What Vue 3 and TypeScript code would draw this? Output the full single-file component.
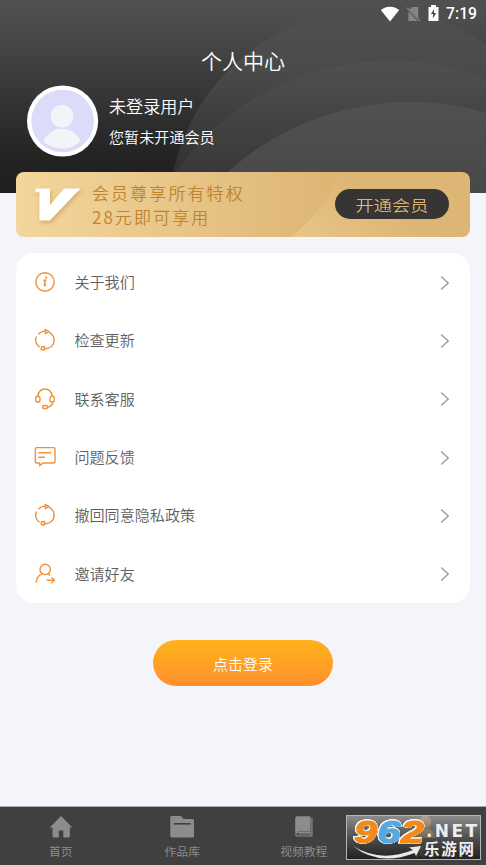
<script setup lang="ts">
type IconName = 'info' | 'refresh' | 'service' | 'message' | 'invite'

interface MenuItem {
  label: string
  icon: IconName
}

const menu: MenuItem[] = [
  { label: '关于我们', icon: 'info' },
  { label: '检查更新', icon: 'refresh' },
  { label: '联系客服', icon: 'service' },
  { label: '问题反馈', icon: 'message' },
  { label: '撤回同意隐私政策', icon: 'refresh' },
  { label: '邀请好友', icon: 'invite' },
]
</script>

<template>
  <div class="page">
    <header class="header">
      <svg class="rings" width="486" height="193" viewBox="0 0 486 193">
        <defs>
          <linearGradient id="ringA" gradientUnits="userSpaceOnUse" x1="0" y1="20" x2="0" y2="193">
            <stop offset="0" stop-color="#4f4f4f" />
            <stop offset=".3" stop-color="#4a4a4a" />
            <stop offset="1" stop-color="#2b2b2b" />
          </linearGradient>
          <linearGradient id="ringB" gradientUnits="userSpaceOnUse" x1="0" y1="61" x2="0" y2="193">
            <stop offset="0" stop-color="#505050" />
            <stop offset="1" stop-color="#343434" />
          </linearGradient>
          <linearGradient id="ringC" gradientUnits="userSpaceOnUse" x1="0" y1="102" x2="0" y2="193">
            <stop offset="0" stop-color="#515151" />
            <stop offset="1" stop-color="#484848" />
          </linearGradient>
        </defs>
        <circle cx="373" cy="214" r="204" fill="url(#ringA)" />
        <circle cx="390" cy="324" r="263" fill="url(#ringB)" />
        <circle cx="410" cy="374" r="272" fill="url(#ringC)" />
      </svg>
      <div class="status">
        <svg class="wifi" width="20" height="16" viewBox="0 0 20 16">
          <path d="M.8 4.1C6-.4 14-.4 19.2 4.1L10 15.4z" fill="#fff" />
        </svg>
        <svg class="sim" width="15" height="16" viewBox="0 0 15 16">
          <path d="M6 1h6.2v11.7L3.5 3.5zM2.4 5.2l9.2 9.8H2.4z" fill="#858585" />
          <path d="M1 1.7l13 13.4" stroke="#858585" stroke-width="1.3" />
        </svg>
        <svg class="battery" width="11" height="16" viewBox="0 0 11 16">
          <path d="M3 0h5v2h2.5v14H.5V2H3z" fill="#fff" />
          <path d="M6.2 4L2.9 9h2.2L4.7 13.5 8.2 8H6z" fill="#494949" />
        </svg>
        <span class="time">7:19</span>
      </div>
      <h1 class="title">个人中心</h1>
      <div class="profile">
        <svg class="avatar" width="72" height="72" viewBox="0 0 72 72">
          <circle cx="35.6" cy="36" r="35.6" fill="#fff" />
          <circle cx="35.6" cy="36" r="31.3" fill="#dbdcf9" />
          <circle cx="35" cy="31.3" r="11.3" fill="#f2f4f8" />
          <path d="M16.4 56C23.6 39.5 46.1 39.5 53.6 56C44.6 66 25.6 66 16.4 56z" fill="#f2f4f8" />
        </svg>
        <div class="user">
          <div class="name">未登录用户</div>
          <div class="state">您暂未开通会员</div>
        </div>
      </div>
    </header>

    <section class="vip">
      <svg class="vip-bg" width="454" height="65" viewBox="0 0 454 65">
        <defs>
          <linearGradient id="goldA" x1="0" y1="0" x2="1" y2="0">
            <stop offset="0" stop-color="#f3d69d" />
            <stop offset="1" stop-color="#ddb472" />
          </linearGradient>
          <linearGradient id="goldB" x1="0" y1="1" x2="1" y2=".5">
            <stop offset="0" stop-color="#e9c788" />
            <stop offset=".65" stop-color="#ddb574" />
          </linearGradient>
        </defs>
        <rect width="330" height="65" fill="url(#goldA)" />
        <path d="M324 0Q309 40 274 65H454V0z" fill="url(#goldB)" />
      </svg>
      <svg class="vee" width="48" height="38" viewBox="0 0 48 38">
        <path d="M1.5 2.5H16V19L30 2.5H46.5L16 34.5H5.4V6.2H1.5z" fill="#fff" />
      </svg>
      <div class="vip-text">
        <div>会员尊享所有特权</div>
        <div>28元即可享用</div>
      </div>
      <button class="vip-btn"><span>开通会员</span></button>
    </section>

    <main class="card">
      <div v-for="item in menu" :key="item.label" class="row">
        <svg class="icon" width="24" height="24" viewBox="0 0 24 24">
          <template v-if="item.icon === 'info'">
            <circle cx="12" cy="12" r="9.2" />
            <path d="M10.4 10.7l2.2-.6-1.3 5q0 1 1.8-.2" stroke-width="1.6" />
            <circle class="solid" cx="13.3" cy="7.7" r="1.1" />
          </template>
          <template v-else-if="item.icon === 'refresh'">
            <path d="M3.4 8.6C1.8 12.8 3.2 16.6 6.6 19.2M5.2 6.4C7 4.3 9 3.2 12 3.1M15.8 4.2c6.3 3 7 10.6 2.2 14.6-2 1.5-4.3 2.1-6.3 1.9" />
            <path d="M12.2 1.3l3.6 2-3.4 2.3zM11.7 18.4l-3.2.6-.3 2.3 2.9 1z" />
          </template>
          <template v-else-if="item.icon === 'service'">
            <path d="M4.6 9.1C6.4-.4 17.6-.4 19.4 9.1M19.9 15.5c-.7 2.6-2.3 4.2-5.4 4.7" />
            <rect x="2.7" y="9.2" width="4.3" height="5.8" rx="2.1" />
            <rect x="17" y="9.2" width="4.3" height="5.8" rx="2.1" />
            <rect x="9.6" y="18.5" width="5" height="3" rx="1.5" />
          </template>
          <template v-else-if="item.icon === 'message'">
            <path d="M3.4 2.6H20.6Q22 2.6 22 4V16.8Q22 18 20.7 18H9.7L6.7 20.8V18H3.6Q2.4 18 2.4 16.8V4Q2.4 2.6 3.4 2.6zM5.5 7.7H18M5.5 12.3H12" />
          </template>
          <template v-else>
            <circle cx="12.2" cy="7.4" r="5.2" />
            <path d="M3.2 20.8c.3-4.8 2.4-7.6 5.8-9M15.2 12.1l2.1 1.3M13.6 18.2h8M18.4 15.2l3.1 3-3.1 3" />
          </template>
        </svg>
        <span class="label">{{ item.label }}</span>
        <svg class="chev" width="10" height="16" viewBox="0 0 10 16">
          <path d="M1.2 1.6L8.2 8l-7 6.5" />
        </svg>
      </div>
    </main>

    <button class="login"><span>点击登录</span></button>

    <nav class="tabs">
      <div class="tab">
        <svg width="24" height="24" viewBox="0 0 24 24">
          <path d="M12 1L23.3 12.4H20.8V21Q20.8 22.6 19.2 22.6H14.3V15.5H9.8V22.6H5Q3.5 22.6 3.5 21V12.4H.8z" fill="#8c8c8c" />
        </svg>
        <span>首页</span>
      </div>
      <div class="tab">
        <svg width="24" height="24" viewBox="0 0 24 24">
          <path d="M1.6 1H11l2.4 3H22.4Q24 4 24 5.5V21Q24 22.6 22.4 22.6H1.8Q.3 22.6.3 21V2.2Q.3 1 1.6 1z" fill="#8c8c8c" />
          <path d="M3.7 8.8H20.8" stroke="#404040" stroke-width="1.6" />
        </svg>
        <span>作品库</span>
      </div>
      <div class="tab">
        <svg width="24" height="24" viewBox="0 0 24 24">
          <path d="M5.4 1.2H17.2Q18.6 1.2 18.6 2.6V16.5H6.2Q4.4 16.5 3.2 18V3.4Q3.2 1.2 5.4 1.2z" fill="#8c8c8c" />
          <path d="M19.9 3V21H5.9Q3.8 21 3.8 19.2T5.9 17.3H18.2V19H6.4" fill="none" stroke="#8c8c8c" stroke-width="1.2" />
        </svg>
        <span>视频教程</span>
      </div>
      <div class="tab active">
        <svg width="24" height="24" viewBox="0 0 24 24">
          <circle cx="12" cy="7" r="6.2" fill="#e29a3f" />
          <path d="M1.5 23Q2 13.5 12 13.5T22.5 23z" fill="#e29a3f" />
        </svg>
        <span>我的</span>
      </div>
      <div class="mark">
        <svg class="mark-art" width="135" height="45" viewBox="0 0 135 45">
          <path d="M7 31Q34 48 67 35L63 32.5L75 31L70 41L68.500 38Q33 52 7 31z" fill="#e9e9e9" />
          <g class="digits">
            <text x="8" y="28" textLength="23" lengthAdjust="spacingAndGlyphs" fill="#f28a18" stroke="#f28a18">9</text>
            <text x="31.500" y="28" textLength="23" lengthAdjust="spacingAndGlyphs" fill="#55a9e0" stroke="#55a9e0">6</text>
            <text x="55" y="28" textLength="23" lengthAdjust="spacingAndGlyphs" fill="#f28a18" stroke="#f28a18">2</text>
          </g>
          <text class="net" x="80" y="21.500" textLength="51">.NET</text>
          <text class="cn" x="78" y="40" textLength="50">乐游网</text>
        </svg>
      </div>
    </nav>
  </div>
</template>

<style>
body {
  margin: 0;
  background: #f4f5fa;
}
</style>

<style scoped>
.page {
  width: 486px;
  height: 865px;
  display: flex;
  flex-direction: column;
  overflow: hidden;
  background: #f4f5fa;
  font-family: Roboto, 'Noto Sans CJK SC', sans-serif;
}
button {
  border: 0;
  padding: 0;
  font-family: inherit;
}
.header {
  position: relative;
  height: 193px;
  flex: none;
  background: linear-gradient(#505050 0, #4d4d4d 20px, #222 160px, #202020 193px);
  color: #fff;
}
.rings {
  position: absolute;
  inset: 0;
}
.status {
  position: relative;
  display: flex;
  align-items: center;
  height: 27px;
  padding-right: 9px;
  justify-content: flex-end;
}
.wifi { margin-right: 6px; }
.sim { margin-right: 7px; }
.battery { margin-right: 7px; margin-top: -1px; }
.time {
  font-size: 15.7px;
  font-weight: 500;
}
.title {
  position: relative;
  margin: 19px 0 0;
  text-align: center;
  font-size: 21px;
  line-height: 32px;
  font-weight: 350;
}
.profile {
  position: relative;
  display: flex;
  padding: 7px 0 0 27px;
}
.user { margin: 9px 0 0 10px; font-weight: 350; }
.name {
  font-size: 17.1px;
  line-height: 27px;
}
.state {
  font-size: 15.1px;
  line-height: 26px;
  margin-top: 4px;
}
.vip {
  position: relative;
  display: flex;
  align-items: center;
  flex: none;
  width: 454px;
  height: 65px;
  margin: -21px 16px 0;
  border-radius: 8px;
  overflow: hidden;
}
.vip-bg {
  position: absolute;
  inset: 0;
}
.vee {
  position: relative;
  margin-left: 18px;
  filter: drop-shadow(1px 2px 2px rgba(171, 119, 39, 0.45));
}
.vip-text {
  position: relative;
  margin-left: 10px;
  font-family: 'Noto Sans CJK SC', sans-serif;
  font-size: 17px;
  font-weight: 350;
  line-height: 24px;
  letter-spacing: 2.1px;
  color: #bd852d;
  white-space: nowrap;
}
.vip-btn {
  position: relative;
  margin: -2px 21px 0 auto;
  width: 114px;
  height: 30px;
  border-radius: 15px;
  background: #373533;
  color: #deb574;
  font-size: 16px;
  font-weight: 350;
}
.vip-btn span {
  display: inline-block;
  transform: scale(1.14, 0.95);
}
.card {
  flex: none;
  margin: 16px 16px 0;
  height: 350px;
  border-radius: 18px;
  background: #fff;
  display: grid;
  grid-template-rows: repeat(6, 1fr);
}
.row {
  display: flex;
  align-items: center;
  padding: 0 20px 0 17.4px;
}
.icon {
  fill: none;
  stroke: #f0923a;
  stroke-width: 1.4;
  stroke-linejoin: round;
}
.solid {
  fill: #f0923a;
  stroke: none;
}
.label {
  margin: 2px 0 0 17px;
  font-size: 15.1px;
  font-weight: 350;
  line-height: 24px;
  color: #5f5f5f;
}
.chev {
  margin-left: auto;
  margin-top: 1px;
  fill: none;
  stroke: #999ba1;
  stroke-width: 1.4;
}
.login {
  flex: none;
  align-self: center;
  width: 180px;
  height: 46px;
  margin-top: 37px;
  border-radius: 23px;
  background: linear-gradient(#ffb31c, #ff902c);
  color: #fff;
  font-size: 15px;
  font-weight: 350;
}
.tabs {
  position: relative;
  flex: none;
  margin-top: auto;
  height: 58px;
  border-top: 1px solid #aaabad;
  background: #404040;
  display: grid;
  grid-template-columns: repeat(4, 1fr);
}
.tab {
  display: flex;
  flex-direction: column;
  align-items: center;
  padding-top: 8px;
  font-size: 11.8px;
  line-height: 20px;
  color: #8c8c8c;
}
.tab span { margin-top: 3px; }
.active { color: #d9964a; }
.mark {
  position: absolute;
  left: 346px;
  top: 8px;
  width: 133px;
  height: 43px;
  border: 1px solid #b5b5b5;
  background: linear-gradient(rgba(165, 165, 165, 0.75), rgba(85, 85, 85, 0.75) 50%, rgba(25, 25, 25, 0.8));
}
.mark-art {
  display: block;
  margin: -1px;
}
.digits {
  font: italic 700 31px 'Liberation Sans', sans-serif;
  stroke-width: 1.2px;
  filter: drop-shadow(0.8px 0 0 #f4f4f4) drop-shadow(-0.8px 0 0 #f4f4f4) drop-shadow(0 0.8px 0 #f4f4f4) drop-shadow(0 -0.8px 0 #f4f4f4);
}
.net {
  font: 700 17px 'DejaVu Sans', sans-serif;
  fill: #eee;
}
.cn {
  font: 700 15.500px 'Noto Sans CJK SC', sans-serif;
  fill: #eee;
}
</style>
